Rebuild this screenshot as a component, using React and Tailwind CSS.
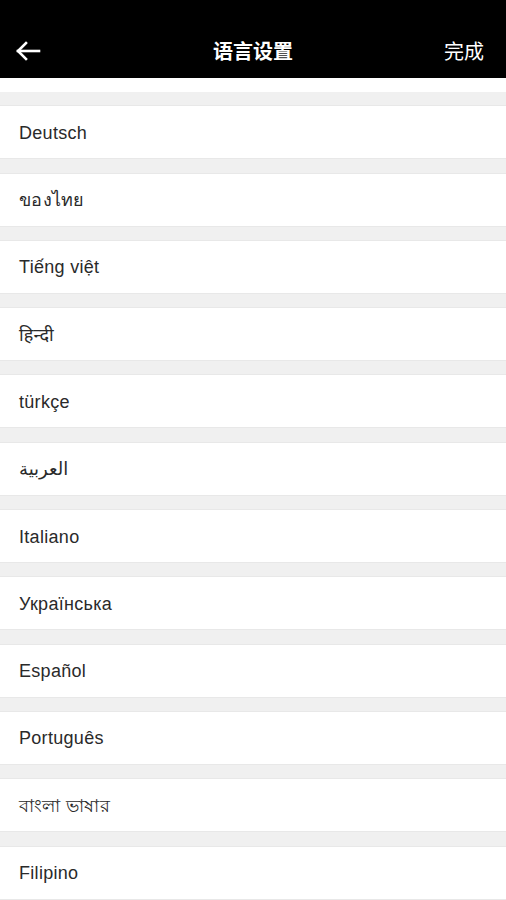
import React from "react";

const langs = [
  "Deutsch",
  "ของไทย",
  "Tiếng việt",
  "हिन्दी",
  "türkçe",
  "العربية",
  "Italiano",
  "Українська",
  "Español",
  "Português",
  "বাংলা ভাষার",
  "Filipino",
];

export default function App() {
  return (
    <div className="w-[506px] h-[900px] overflow-hidden bg-white" style={{ fontFamily: '"Liberation Sans", "Noto Sans", "DejaVu Sans", "Noto Sans CJK SC", sans-serif' }}>
      <div className="h-[78px] bg-black flex items-end">
        <div className="h-[54px] w-full flex items-center justify-between px-[15px] relative">
          <svg width="26" height="20" viewBox="0 0 26 20" fill="none" stroke="white" strokeWidth="2.6" strokeLinecap="square">
            <path d="M3 10H24" />
            <path d="M11 2L3 10L11 18" strokeLinejoin="miter" />
          </svg>
          <div className="absolute left-0 right-0 text-center text-white text-[20px] font-bold pointer-events-none" style={{ fontFamily: '"Noto Sans CJK SC", sans-serif' }}>
            语言设置
          </div>
          <div className="text-white text-[20px] mr-[7px]" style={{ fontFamily: '"Noto Sans CJK SC", sans-serif' }}>
            完成
          </div>
        </div>
      </div>
      <div className="h-[14px] bg-white" />
      {langs.map((l) => (
        <div key={l}>
          <div className="h-[13.3px] bg-[#f0f0f0]" />
          <div className="h-[54px] bg-white border-y border-[#e8e8e8] flex items-center pl-[19px] pt-[2px] text-[18px] tracking-[0.3px] text-[#2a2a2a]">
            {l}
          </div>
        </div>
      ))}
    </div>
  );
}
